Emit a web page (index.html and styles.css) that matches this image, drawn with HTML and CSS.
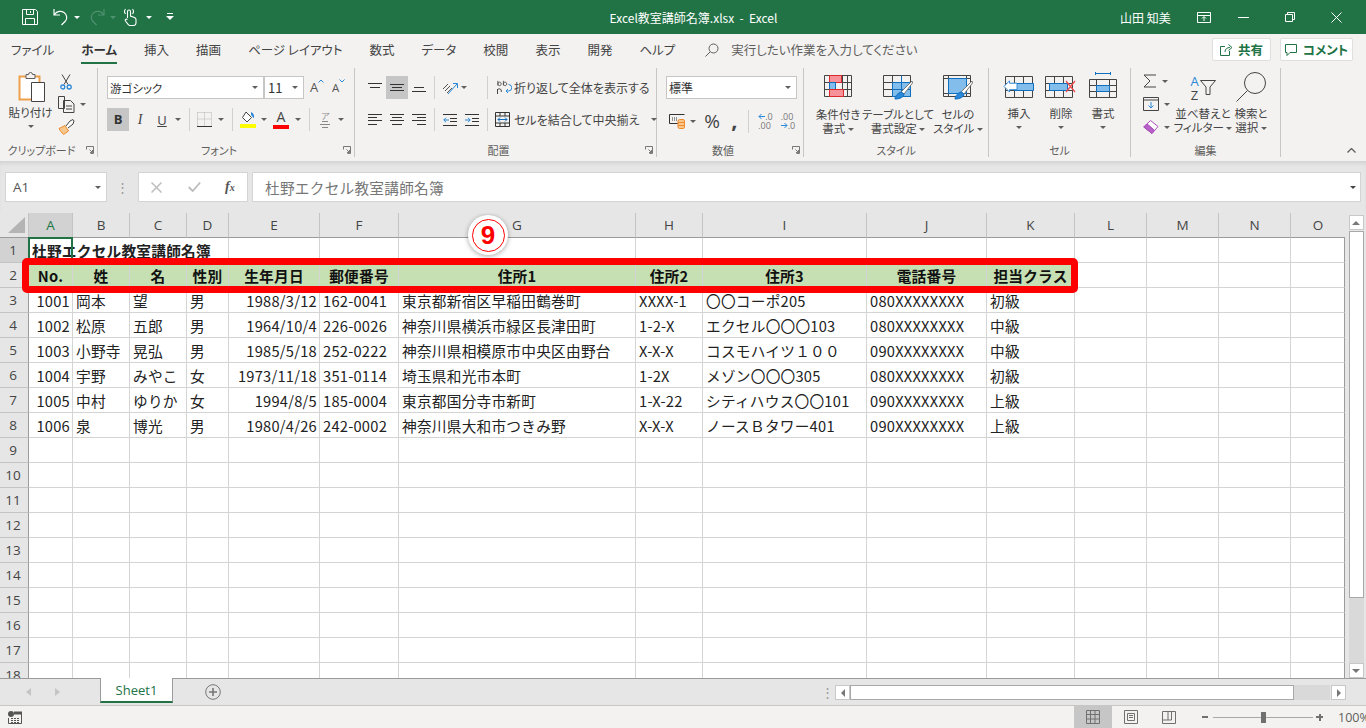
FILE: index.html
```html
<!DOCTYPE html>
<html lang="ja">
<head>
	<meta charset="UTF-8">
	<title>Excel教室講師名簿.xlsx - Excel</title>
	<link rel="stylesheet" href="styles.css">
</head>
<body>
	<header class="titlebar">
		<div class="qat">
			<svg class="q-save" width="18" height="18" viewBox="0 0 18 18" fill="none" stroke="#fff"><path d="M1.500 1.500h13l2 2v13h-15zM5.500 1.500v5h7v-5M4.500 16.500v-6h9v6M9.500 3v2"/></svg>
			<svg class="q-undo" width="16" height="18" viewBox="0 0 16 18" fill="none" stroke="#fff" stroke-width="1.200"><path d="M1 1v6h6M1.500 6.500C4 3 8 2.500 11 4.500s3.500 6 1.500 8.500l-4 4"/></svg>
			<i class="dd dd-white q-dd"></i>
			<svg class="q-redo" width="16" height="18" viewBox="0 0 16 18" fill="none" stroke="#4f9170" stroke-width="1.200"><path d="M15 1v6H9M14.500 6.500C12 3 8 2.500 5 4.500s-3.500 6-1.500 8.500l4 4"/></svg>
			<i class="dd dd-dim q-dd"></i>
			<svg class="q-touch" width="14" height="18" viewBox="0 0 14 18" fill="none" stroke="#fff" stroke-width="1.100"><path d="M4.500 10V3.500a1.500 1.500 0 0 1 3 0V8l4 1.500c1 .5 1.500 1 1.500 2V15c0 1.500-1 2.500-2.500 2.500H7c-1 0-1.500-.5-2-1.200L2.500 13c-.8-1 .5-2.500 2-1.500M2.500 6a4 4 0 0 1 0-5 M9.500 6a4 4 0 0 0 0-5"/></svg>
			<i class="dd dd-white q-dd2"></i>
			<svg class="q-more" width="8" height="8" viewBox="0 0 8 8" fill="#fff"><path d="M1 0h6v1H1zM0 3h8L4 7z"/></svg>
		</div>
		<div class="doc-title">Excel教室講師名簿.xlsx &nbsp;-&nbsp; Excel</div>
		<div class="win">
			<span class="user">山田 知美</span>
			<svg class="w-ribbon" width="14" height="11" viewBox="0 0 14 11" fill="none" stroke="#fff"><path d="M.5.500h13v10H.500zM.5 3.500h13M7 9V5M5 6.500l2-2 2 2"/></svg>
			<svg class="w-min" width="11" height="1" viewBox="0 0 11 1"><path d="M0 0h11v1H0z" fill="#fff"/></svg>
			<svg class="w-max" width="10" height="10" viewBox="0 0 10 10" fill="none" stroke="#fff"><path d="M.5 2.500h7v7h-7zM2.500 2.500v-2h7v7h-2"/></svg>
			<svg class="w-close" width="11" height="11" viewBox="0 0 11 11" stroke="#fff"><path d="M.5.500l10 10M10.500.500l-10 10"/></svg>
		</div>
	</header>

	<nav class="tabs">
		<span class="tab">ファイル</span>
		<span class="tab tab-on">ホーム</span>
		<span class="tab">挿入</span>
		<span class="tab">描画</span>
		<span class="tab">ページ レイアウト</span>
		<span class="tab">数式</span>
		<span class="tab">データ</span>
		<span class="tab">校閲</span>
		<span class="tab">表示</span>
		<span class="tab">開発</span>
		<span class="tab">ヘルプ</span>
		<svg class="search" width="14" height="14" viewBox="0 0 14 14" fill="none" stroke="#605e5c"><circle cx="8.500" cy="5.500" r="4.500"/><path d="M5.200 8.800L.5 13.500"/></svg>
		<span class="tell">実行したい作業を入力してください</span>
		<span class="pill pill-share">
			<svg width="13" height="13" viewBox="0 0 13 13" fill="none" stroke="#217346"><path d="M5 3.500H.5v9h9V8M5 9c0-3 2-4.500 5-4.500M8.500 1.500l3.500 3-3.500 3"/></svg>
			共有
		</span>
		<span class="pill pill-comment">
			<svg width="13" height="12" viewBox="0 0 13 12" fill="none" stroke="#217346"><path d="M.5.500h11v8H5l-3 3v-3H.5z"/></svg>
			コメント
		</span>
	</nav>

	<section class="ribbon">
		<div class="group g-clip">
			<div class="group-body clip-body">
				<div class="big paste">
					<svg width="28" height="31" viewBox="0 0 28 31" fill="none"><path d="M1.500 5.500h20v23h-20z" fill="#fff" stroke="#ed9f4b" stroke-width="2"/><path d="M8 3.500h2.500a2 2 0 0 1 4 0H17v4H8z" fill="#f3f2f1" stroke="#605e5c"/><path d="M13.500 11.500h13v19h-13z" fill="#fff" stroke="#444"/></svg>
					<span>貼り付け</span>
					<i class="dd"></i>
				</div>
				<div class="clip-tools">
					<svg class="cut" width="12" height="16" viewBox="0 0 12 16" fill="none"><path d="M2 .5l6 10M10 .5l-6 10" stroke="#444"/><circle cx="2.800" cy="13" r="2" stroke="#2b88d8" stroke-width="1.300"/><circle cx="9.200" cy="13" r="2" stroke="#2b88d8" stroke-width="1.300"/></svg>
					<span class="copy-row">
						<svg width="17" height="17" viewBox="0 0 17 17" fill="none" stroke="#444"><path d="M.5.500h6l0 12h-6zM5.500 4.500h7l3.500 3.500v8.500H5.500zM8 10h6M8 13h6"/></svg>
						<i class="dd"></i>
					</span>
					<svg class="painter" width="17" height="16" viewBox="0 0 17 16" fill="none"><path d="M1 9.500l6-3 3.500 5.500-5 3.500C4 14 2 11.500 1 9.500z" fill="#f8c78e" stroke="#ed8b2e"/><path d="M8 7l4-5 3-1.500 1 1.500-1 3-5 4" fill="#fff" stroke="#444"/></svg>
				</div>
			</div>
			<div class="group-label"><span>クリップボード</span><svg class="launch" width="8" height="8" viewBox="0 0 8 8" fill="none" stroke="#777"><path d="M.5 3.500v-3h7v7h-3M3.500 3.500l3 3M4 6.500h2.500V4"/></svg></div>
		</div>

		<div class="group g-font">
			<div class="group-body">
				<div class="font-top">
					<div class="combo combo-font"><span>游ゴシック</span><i class="dd"></i></div>
					<div class="combo combo-size"><span>11</span><i class="dd"></i></div>
					<span class="grow-a">A<svg width="6" height="4" viewBox="0 0 6 4" fill="none" stroke="#2b88d8"><path d="M.5 3.500L3 1l2.500 2.500"/></svg></span>
					<span class="grow-a small-a">A<svg width="6" height="4" viewBox="0 0 6 4" fill="none" stroke="#2b88d8"><path d="M.5.500L3 3 5.500.500"/></svg></span>
				</div>
				<div class="font-tools">
					<b class="btn-b">B</b>
					<span class="btn-i">I</span>
					<span class="btn-u">U</span>
					<i class="dd"></i>
					<i class="vsep"></i>
					<svg width="15" height="15" viewBox="0 0 15 15" fill="none" stroke="#b5b5b5" stroke-dasharray="1 1"><path d="M.5.500h14v13M.5.500v13M7.500.500v13M.5 7h14"/><path d="M0 14.500h15" stroke="#333" stroke-dasharray="none"/></svg>
					<i class="dd"></i>
					<i class="vsep"></i>
					<span class="swatch-ico">
						<svg width="16" height="12" viewBox="0 0 16 12" fill="none"><path d="M6 1l5.500 5.500L7 11 2.500 6.500z" fill="#fff" stroke="#444"/><path d="M11 1c2.500 1 3.500 3.500 3 6-1.500-.5-1.500-2-3-3z" fill="#2b88d8"/></svg>
						<i class="bar bar-yellow"></i>
					</span>
					<i class="dd"></i>
					<span class="swatch-ico color-a">A<i class="bar bar-red"></i></span>
					<i class="dd"></i>
					<i class="vsep"></i>
					<span class="phon"><span class="phon-a">ア</span><svg width="10" height="7" viewBox="0 0 10 7" stroke="#888"><path d="M2 .5h6M0 3.500h10M2 6.500h6"/></svg></span>
					<i class="dd"></i>
				</div>
			</div>
			<div class="group-label"><span>フォント</span><svg class="launch" width="8" height="8" viewBox="0 0 8 8" fill="none" stroke="#777"><path d="M.5 3.500v-3h7v7h-3M3.500 3.500l3 3M4 6.500h2.500V4"/></svg></div>
		</div>

		<div class="group g-align">
			<div class="group-body align-grid">
				<span class="ai"><svg width="14" height="11" viewBox="0 0 14 11" stroke="#333"><path d="M0 1.500h14M2 5.500h10"/></svg></span>
				<span class="ai ai-on"><svg width="14" height="11" viewBox="0 0 14 11" stroke="#333"><path d="M0 2.500h14M2 5.500h10M0 8.500h14"/></svg></span>
				<span class="ai"><svg width="14" height="11" viewBox="0 0 14 11" stroke="#333"><path d="M2 5.500h10M0 9.500h14M2 1.500"/></svg></span>
				<i class="vsep"></i>
				<span class="ai"><svg width="16" height="14" viewBox="0 0 16 14" fill="none"><path d="M1 8l5-5M3 10l5-5M5 12l5-5" stroke="#555"/><path d="M6 13L15 3M11 2.500h4.500V7" stroke="#2b88d8"/></svg></span>
				<i class="dd dd-left"></i>
				<i class="vsep"></i>
				<span class="wide wide-wrap">
					<svg width="15" height="16" viewBox="0 0 15 16" fill="none"><path d="M10 9h1.500a3 3 0 0 0 0-6.500M9 9l2-2M9 9l2 2" stroke="#2b88d8" transform="translate(0 2)"/><path d="M.5 14V9M.5 11.500A2 2 0 1 1 4 12" stroke="#444"/><path d="M1 1v5.500M1 4.500a2 2 0 1 1 0 .1M7.500 1v5.500M7.500 4.500a2 2 0 1 1 0 .1" stroke="#444" transform="scale(.85)"/></svg>
					<span>折り返して全体を表示する</span>
				</span>
				<span class="ai"><svg width="14" height="11" viewBox="0 0 14 11" stroke="#333"><path d="M0 .5h14M0 3.500h9M0 6.500h14M0 10.500h9"/></svg></span>
				<span class="ai"><svg width="14" height="11" viewBox="0 0 14 11" stroke="#333"><path d="M0 .5h14M2 3.500h10M0 6.500h14M2 10.500h10"/></svg></span>
				<span class="ai"><svg width="14" height="11" viewBox="0 0 14 11" stroke="#333"><path d="M0 .5h14M5 3.500h9M0 6.500h14M5 10.500h9"/></svg></span>
				<i class="vsep"></i>
				<span class="ai"><svg width="14" height="12" viewBox="0 0 14 12" fill="none"><path d="M0 .5h14M7 4.500h7M7 7.500h7M0 11.500h14" stroke="#333"/><path d="M6 6H.8M3 3.800L.8 6 3 8.200" stroke="#2b88d8"/></svg></span>
				<span class="ai"><svg width="14" height="12" viewBox="0 0 14 12" fill="none"><path d="M0 .5h14M7 4.500h7M7 7.500h7M0 11.500h14" stroke="#333"/><path d="M0 6h5.200M3 3.800L5.200 6 3 8.200" stroke="#2b88d8"/></svg></span>
				<i class="vsep"></i>
				<span class="wide wide-merge">
					<svg width="15" height="15" viewBox="0 0 15 15" fill="none"><path d="M.5.500h14v14H.5zM.5 4h14M.5 11h14M5 .5V4M10 .5V4M5 11v3.500M10 11v3.500" stroke="#333"/><path d="M3 7.500h9M5 5.500l-2 2 2 2M10 5.500l2 2-2 2" stroke="#106ebe"/></svg>
					<span>セルを結合して中央揃え</span>
					<i class="dd"></i>
				</span>
			</div>
			<div class="group-label"><span>配置</span><svg class="launch" width="8" height="8" viewBox="0 0 8 8" fill="none" stroke="#777"><path d="M.5 3.500v-3h7v7h-3M3.500 3.500l3 3M4 6.500h2.500V4"/></svg></div>
		</div>

		<div class="group g-num">
			<div class="group-body">
				<div class="combo combo-num"><span>標準</span><i class="dd"></i></div>
				<div class="num-tools">
					<svg width="16" height="16" viewBox="0 0 16 16" fill="none"><path d="M.5 1.500h15M.5 1.500v9h9" stroke="#333"/><path d="M3 5h6M3 7h6" stroke="#333" stroke-dasharray="1 1"/><rect x="9" y="6.500" width="6.500" height="9" rx="1.500" fill="#f8c78e" stroke="#ed8b2e"/><path d="M9 9.500h6.500M9 12.500h6.500" stroke="#ed8b2e"/></svg>
					<i class="dd"></i>
					<span class="pct">%</span>
					<span class="comma">,</span>
					<i class="vsep"></i>
					<span class="dec"><svg width="7" height="7" viewBox="0 0 7 7" fill="none" stroke="#2b88d8"><path d="M7 3.500H1M3.500 1L1 3.500 3.500 6"/></svg>.0<br><em>.00</em></span>
					<span class="dec"><em>.00</em><br><svg width="7" height="7" viewBox="0 0 7 7" fill="none" stroke="#2b88d8"><path d="M0 3.500h6M3.500 1L6 3.500 3.500 6"/></svg>.0</span>
				</div>
			</div>
			<div class="group-label"><span>数値</span><svg class="launch" width="8" height="8" viewBox="0 0 8 8" fill="none" stroke="#777"><path d="M.5 3.500v-3h7v7h-3M3.500 3.500l3 3M4 6.500h2.500V4"/></svg></div>
		</div>

		<div class="group g-style">
			<div class="group-body big-row">
				<div class="big">
					<svg class="top-ico" width="28" height="23" viewBox="0 0 28 23" fill="none"><path d="M.5.500h27v21H.5zM.5 7.500h27M.5 14.500h27M5.500.5v21M18.500.5v21M23.500.5v21" stroke="#444"/><path d="M5.500.5h12v7h-12z" fill="#f7929a" stroke="#d92b2b"/><path d="M5.500 7.500h6v7h-6z" fill="#83bdec" stroke="#106ebe"/><path d="M5.500 14.500h14v7h-14z" fill="#f7929a" stroke="#d92b2b"/></svg>
					<span>条件付き</span>
					<span>書式 <i class="dd"></i></span>
				</div>
				<div class="big">
					<svg class="top-ico" width="30" height="25" viewBox="0 0 30 25" fill="none"><path d="M.5.500h27v21H.5zM.5 7.500h27M.5 14.500h27M9.500.5v21M18.500.5v21" stroke="#444"/><path d="M9.500 7.500h18v14h-18z" fill="#83bdec"/><path d="M9.500 7.500h18v14h-18zM18.500 .5v21M9.500 14.500h18" stroke="#106ebe"/><path d="M29 6L18 17l3 2L29.500 8z" fill="#fff" stroke="#777"/><path d="M12 24c0-3 3-6 6-7l3 2c0 3-4 5-9 5z" fill="#2b88d8" stroke="#106ebe"/></svg>
					<span>テーブルとして</span>
					<span>書式設定 <i class="dd"></i></span>
				</div>
				<div class="big">
					<svg class="top-ico" width="30" height="25" viewBox="0 0 30 25" fill="none"><path d="M.5.500h27v21H.5zM.5 3.500h27M.5 18.500h27M5.500.5v21M23.500.5v21" stroke="#444"/><path d="M5.500 3.500h18v15h-18z" fill="#83bdec" stroke="#106ebe"/><path d="M29 6L18 17l3 2L29.500 8z" fill="#fff" stroke="#777"/><path d="M12 24c0-3 3-6 6-7l3 2c0 3-4 5-9 5z" fill="#2b88d8" stroke="#106ebe"/></svg>
					<span>セルの</span>
					<span>スタイル <i class="dd"></i></span>
				</div>
			</div>
			<div class="group-label label-plain"><span>スタイル</span></div>
		</div>

		<div class="group g-cell">
			<div class="group-body big-row">
				<div class="big">
					<svg class="cell-ico" width="32" height="26" viewBox="0 0 32 26" fill="none"><path d="M2.500 4.500h27v21h-27zM2.500 11.500h27M2.500 18.500h27M11.500 4.500v21M20.500 4.500v21" stroke="#444"/><path d="M11.500 11.500h19v7h-19z" fill="#83bdec" stroke="#106ebe"/><path d="M14 11H6.500V8L1 15l5.500 7v-3H14z" transform="translate(0 0) scale(1 .8) translate(0 3)" fill="#fff" stroke="#2b88d8"/></svg>
					<span>挿入</span>
					<i class="dd"></i>
				</div>
				<div class="big">
					<svg class="cell-ico" width="32" height="26" viewBox="0 0 32 26" fill="none"><path d="M.5 4.500h27v21H.5zM.5 11.500h27M.5 18.500h27M9.500 4.500v21M18.500 4.500v21" stroke="#444"/><path d="M4.500 11.500h18v7h-18z" fill="#83bdec" stroke="#106ebe"/><path d="M21 9l9 11M30 9l-9 11" stroke="#f1494c" stroke-width="1.200"/></svg>
					<span>削除</span>
					<i class="dd"></i>
				</div>
				<div class="big">
					<svg class="cell-ico" width="28" height="26" viewBox="0 0 28 26" fill="none"><path d="M.5 7.500h27v18H.5zM.5 13.500h27M.5 19.500h27M7.500 7.500v18M20.500 7.500v18" stroke="#444"/><path d="M7.500 13.500h13v6h-13z" fill="#83bdec" stroke="#106ebe"/><path d="M6 1.500h16M6.500 0v3M21.500 0v3" stroke="#106ebe"/></svg>
					<span>書式</span>
					<i class="dd"></i>
				</div>
			</div>
			<div class="group-label label-plain"><span>セル</span></div>
		</div>

		<div class="group g-edit">
			<div class="group-body big-row">
				<div class="edit-tools">
					<span class="edit-row"><svg width="14" height="14" viewBox="0 0 14 14" fill="none" stroke="#444"><path d="M13 1H1l6 6-6 6h12"/></svg><i class="dd"></i></span>
					<span class="edit-row"><svg width="16" height="14" viewBox="0 0 16 14" fill="none"><path d="M.5.500h15v13H.5zM.5 3h15" stroke="#444"/><path d="M8 5v6M5.500 8.500L8 11l2.500-2.500" stroke="#2b88d8"/></svg><i class="dd"></i></span>
					<span class="edit-row"><svg width="16" height="14" viewBox="0 0 16 14" fill="none"><path d="M.8 7L7.500.5 15 6.500 9 13.500z" fill="#fff" stroke="#a94fb8"/><path d="M.8 7L4 3.800l7.500 6.500L9 13.500z" fill="#b660c8" stroke="#a94fb8"/></svg><i class="dd"></i></span>
				</div>
				<div class="big">
					<span class="sort-ico">
						<span class="az"><em>A</em><span>Z</span></span>
						<svg width="16" height="15" viewBox="0 0 16 15" fill="none" stroke="#444"><path d="M.5.500h15L10 7v7.500H6V7z"/></svg>
					</span>
					<span>並べ替えと</span>
					<span>フィルター <i class="dd"></i></span>
				</div>
				<div class="big">
					<svg class="top-find" width="30" height="30" viewBox="0 0 30 30" fill="none" stroke="#444"><circle cx="19" cy="11" r="10.500"/><path d="M11.500 18.500L.5 29.500"/></svg>
					<span>検索と</span>
					<span>選択 <i class="dd"></i></span>
				</div>
			</div>
			<div class="group-label label-plain"><span>編集</span></div>
		</div>

		<div class="ribbon-end">
			<svg width="9" height="5" viewBox="0 0 9 5" fill="none" stroke="#605e5c" stroke-width="1.300"><path d="M.5 4.500l4-4 4 4"/></svg>
		</div>
	</section>

	<section class="formula">
		<div class="namebox"><span>A1</span><i class="dd"></i></div>
		<div class="fdots">⋮</div>
		<div class="fbtns">
			<svg width="11" height="11" viewBox="0 0 11 11" stroke="#bdbdbd" stroke-width="1.500"><path d="M.5.500l10 10M10.500.500l-10 10"/></svg>
			<svg width="13" height="10" viewBox="0 0 13 10" fill="none" stroke="#bdbdbd" stroke-width="1.800"><path d="M.7 5l4 4 7.500-8.500"/></svg>
			<span class="fx">f<small>x</small></span>
		</div>
		<div class="finput">杜野エクセル教室講師名簿</div>
		<div class="fchev"><i class="dd dd-dark"></i></div>
	</section>

	<main class="sheet">
		<div class="gridwrap">
			<table class="grid">
				<colgroup>
					<col class="c-row"><col class="c-a"><col class="c-b"><col class="c-b"><col class="c-d"><col class="c-e"><col class="c-f"><col class="c-g"><col class="c-h"><col class="c-i"><col class="c-j"><col class="c-k"><col class="c-l"><col class="c-l"><col class="c-l"><col class="c-o">
				</colgroup>
				<thead>
					<tr>
						<th class="corner"><i></i></th>
						<th class="on">A</th><th>B</th><th>C</th><th>D</th><th>E</th><th>F</th><th>G</th><th>H</th><th>I</th><th>J</th><th>K</th><th>L</th><th>M</th><th>N</th><th>O</th>
					</tr>
				</thead>
				<tbody>
					<tr><th class="on">1</th><td colspan="4" class="title-cell">杜野エクセル教室講師名簿</td><td></td><td></td><td></td><td></td><td></td><td></td><td></td><td></td><td></td><td></td><td></td></tr>
					<tr class="head"><th>2</th><td>No.</td><td>姓</td><td>名</td><td>性別</td><td>生年月日</td><td>郵便番号</td><td>住所1</td><td>住所2</td><td>住所3</td><td>電話番号</td><td>担当クラス</td><td class="blank"></td><td class="blank"></td><td class="blank"></td><td class="blank"></td></tr>
					<tr><th>3</th><td class="r">1001</td><td>岡本</td><td>望</td><td>男</td><td class="r">1988/3/12</td><td>162-0041</td><td>東京都新宿区早稲田鶴巻町</td><td>XXXX-1</td><td>〇〇コーポ205</td><td>080XXXXXXXX</td><td>初級</td><td></td><td></td><td></td><td></td></tr>
					<tr><th>4</th><td class="r">1002</td><td>松原</td><td>五郎</td><td>男</td><td class="r">1964/10/4</td><td>226-0026</td><td>神奈川県横浜市緑区長津田町</td><td>1-2-X</td><td>エクセル〇〇〇103</td><td>080XXXXXXXX</td><td>中級</td><td></td><td></td><td></td><td></td></tr>
					<tr><th>5</th><td class="r">1003</td><td>小野寺</td><td>晃弘</td><td>男</td><td class="r">1985/5/18</td><td>252-0222</td><td>神奈川県相模原市中央区由野台</td><td>X-X-X</td><td>コスモハイツ１００</td><td>090XXXXXXXX</td><td>中級</td><td></td><td></td><td></td><td></td></tr>
					<tr><th>6</th><td class="r">1004</td><td>宇野</td><td>みやこ</td><td>女</td><td class="r">1973/11/18</td><td>351-0114</td><td>埼玉県和光市本町</td><td>1-2X</td><td>メゾン〇〇〇305</td><td>080XXXXXXXX</td><td>初級</td><td></td><td></td><td></td><td></td></tr>
					<tr><th>7</th><td class="r">1005</td><td>中村</td><td>ゆりか</td><td>女</td><td class="r">1994/8/5</td><td>185-0004</td><td>東京都国分寺市新町</td><td>1-X-22</td><td>シティハウス〇〇101</td><td>090XXXXXXXX</td><td>上級</td><td></td><td></td><td></td><td></td></tr>
					<tr><th>8</th><td class="r">1006</td><td>泉</td><td>博光</td><td>男</td><td class="r">1980/4/26</td><td>242-0002</td><td>神奈川県大和市つきみ野</td><td>X-X-X</td><td>ノースＢタワー401</td><td>090XXXXXXXX</td><td>上級</td><td></td><td></td><td></td><td></td></tr>
					<tr><th>9</th><td></td><td></td><td></td><td></td><td></td><td></td><td></td><td></td><td></td><td></td><td></td><td></td><td></td><td></td><td></td></tr>
					<tr><th>10</th><td></td><td></td><td></td><td></td><td></td><td></td><td></td><td></td><td></td><td></td><td></td><td></td><td></td><td></td><td></td></tr>
					<tr><th>11</th><td></td><td></td><td></td><td></td><td></td><td></td><td></td><td></td><td></td><td></td><td></td><td></td><td></td><td></td><td></td></tr>
					<tr><th>12</th><td></td><td></td><td></td><td></td><td></td><td></td><td></td><td></td><td></td><td></td><td></td><td></td><td></td><td></td><td></td></tr>
					<tr><th>13</th><td></td><td></td><td></td><td></td><td></td><td></td><td></td><td></td><td></td><td></td><td></td><td></td><td></td><td></td><td></td></tr>
					<tr><th>14</th><td></td><td></td><td></td><td></td><td></td><td></td><td></td><td></td><td></td><td></td><td></td><td></td><td></td><td></td><td></td></tr>
					<tr><th>15</th><td></td><td></td><td></td><td></td><td></td><td></td><td></td><td></td><td></td><td></td><td></td><td></td><td></td><td></td><td></td></tr>
					<tr><th>16</th><td></td><td></td><td></td><td></td><td></td><td></td><td></td><td></td><td></td><td></td><td></td><td></td><td></td><td></td><td></td></tr>
					<tr><th>17</th><td></td><td></td><td></td><td></td><td></td><td></td><td></td><td></td><td></td><td></td><td></td><td></td><td></td><td></td><td></td></tr>
					<tr><th>18</th><td></td><td></td><td></td><td></td><td></td><td></td><td></td><td></td><td></td><td></td><td></td><td></td><td></td><td></td><td></td></tr>
				</tbody>
			</table>
			<div class="select-box"></div>
			<div class="red-frame"></div>
			<div class="step-badge"><span>9</span></div>
		</div>
		<aside class="vscroll">
			<span class="sb-btn"><i class="sb-up"></i></span>
			<span class="sb-thumb"></span>
			<span class="sb-track"></span>
			<span class="sb-btn"><i class="sb-down"></i></span>
		</aside>
	</main>

	<section class="sheetbar">
		<div class="sheet-nav">
			<i class="nav-l"></i>
			<i class="nav-r"></i>
		</div>
		<div class="sheet-tab">Sheet1</div>
		<svg class="add-sheet" width="16" height="16" viewBox="0 0 16 16" fill="none" stroke="#777"><circle cx="8" cy="8" r="7.300"/><path d="M8 4v8M4 8h8" stroke-width="1.600"/></svg>
		<div class="hdots">⋮</div>
		<div class="hscroll">
			<span class="sb-btn"><i class="sb-left"></i></span>
			<span class="hthumb"></span>
			<span class="htrack"></span>
			<span class="sb-btn"><i class="sb-right"></i></span>
		</div>
	</section>

	<footer class="status">
		<svg class="macro" width="14" height="13" viewBox="0 0 14 13" fill="none"><circle cx="3" cy="3" r="3" fill="#555"/><path d="M6 1.500h7.500v11H.5V7" stroke="#555"/><path d="M3 7.500h9M3 9.500h9M3 11.500h9" stroke="#555" stroke-dasharray="2 1"/><path d="M6 .5h8v3H6z" fill="#555"/></svg>
		<div class="views">
			<span class="view view-on"><svg width="14" height="14" viewBox="0 0 14 14" fill="none" stroke="#707070"><path d="M.5.500h13v13H.5zM.5 4.500h13M.5 9h13M4.500.5v13M9 .5v13"/></svg></span>
			<span class="view"><svg width="14" height="14" viewBox="0 0 14 14" fill="none" stroke="#707070"><path d="M.5.500h13v13H.5zM3.500 3.500h7v7h-7zM5 5.500h4M5 7.500h4"/></svg></span>
			<span class="view"><svg width="14" height="13" viewBox="0 0 14 13" fill="none" stroke="#707070"><path d="M.5.500h13v12H.5zM.5 9h9V.5M6 .5V9"/></svg></span>
		</div>
		<div class="zoom">
			<i class="z-minus"></i>
			<span class="z-slider"><i></i></span>
			<i class="z-plus"></i>
			<span class="z-val">100%</span>
		</div>
	</footer>
</body>
</html>
```

FILE: styles.css
```css
* {
	box-sizing: border-box;
}
html, body {
	margin: 0;
	height: 728px;
	overflow: hidden;
}
body {
	display: flex;
	flex-direction: column;
	background: #f3f2f1;
	color: #444;
	font-family: "Noto Sans CJK JP", "Open Sans", sans-serif;
	font-size: 12px;
	font-feature-settings: "palt";
}
svg {
	display: block;
	flex: none;
}
i, em {
	font-style: normal;
}

/* dropdown arrow */
.dd {
	display: inline-block;
	flex: none;
	width: 0;
	height: 0;
	border-left: 3px solid transparent;
	border-right: 3px solid transparent;
	border-top: 3px solid #605e5c;
	vertical-align: middle;
}
.dd-white { border-top-color: #fff; }
.dd-dim { border-top-color: #4f9170; }
.dd-dark { border-top-color: #444; }

.vsep {
	display: block;
	width: 1px;
	height: 23px;
	background: #d2d0ce;
	justify-self: center;
}

/* title bar */
.titlebar {
	flex: none;
	height: 34px;
	background: #217346;
	color: #fff;
	display: flex;
	align-items: center;
	position: relative;
}
.qat {
	display: flex;
	align-items: center;
	width: 300px;
}
.q-save { margin-left: 21px; }
.q-undo { margin-left: 14px; }
.q-dd { margin-left: 5px; }
.q-redo { margin-left: 9px; }
.q-touch { margin-left: 7px; }
.q-dd2 { margin-left: 9px; }
.q-more { margin-left: 14px; }
.doc-title {
	flex: 1;
	text-align: center;
	padding-right: 32px;
	font-size: 12px;
}
.win {
	display: flex;
	align-items: center;
	width: 247px;
}
.user { margin-left: 1px; width: 77px; }
.w-min { margin-left: 27px; }
.w-max { margin-left: 36px; }
.w-close { margin-left: 36px; }

/* tab strip */
.tabs {
	flex: none;
	height: 31px;
	display: flex;
	align-items: center;
	padding-left: 11px;
	gap: 27px;
	font-size: 12.500px;
	position: relative;
	color: #444;
}
.tab {
	position: relative;
	white-space: nowrap;
}
.tab-on {
	font-weight: 700;
	color: #333;
}
.tab-on::after {
	content: "";
	position: absolute;
	left: 0;
	right: 0;
	bottom: -5px;
	height: 2px;
	background: #217346;
}
.search { margin-left: 3px; margin-right: -15px; }
.tell { color: #605e5c; white-space: nowrap; }
.pill {
	height: 23px;
	background: #fff;
	border: 1px solid #e1dfdd;
	border-radius: 2px;
	display: flex;
	align-items: center;
	justify-content: center;
	gap: 5px;
	color: #217346;
	font-weight: 700;
	font-size: 12.500px;
}
.pill-share { width: 59px; margin-left: auto; }
.pill-comment { width: 73px; margin-left: -18px; margin-right: 13px; }

/* ribbon */
.ribbon {
	flex: none;
	height: 96px;
	display: flex;
	align-items: flex-start;
	padding-top: 3px;
	color: #444;
	font-size: 11.500px;
}
.group {
	height: 89px;
	border-right: 1px solid #c8c6c4;
	display: flex;
	flex-direction: column;
	flex: none;
}
.group-body {
	height: 77px;
	padding-top: 8px;
}
.group-label {
	display: flex;
	align-items: center;
	height: 14px;
	color: #605e5c;
	font-size: 11px;
	margin-top: 0;
}
.group-label span {
	flex: 1;
	text-align: center;
	white-space: nowrap;
}
.launch { margin: 0 3px 0 3px; }

.g-clip { width: 98px; }
.g-font { width: 257px; }
.g-align { width: 302px; }
.g-num { width: 147px; }
.g-style { width: 185px; }
.g-cell { width: 142px; }
.g-edit { width: 150px; }

.big {
	display: flex;
	flex-direction: column;
	align-items: center;
	white-space: nowrap;
	line-height: 14px;
	width: 42px;
	flex: none;
}
.big .dd { vertical-align: 2px; }
.big > .dd { margin-top: 6px; }
.clip-body {
	display: flex;
	padding-top: 3px;
}
.paste {
	margin-left: 9px;
	width: 43px;
	flex: none;
}
.paste svg { margin-bottom: 3px; margin-left: 3px; }
.clip-tools {
	display: flex;
	flex-direction: column;
	margin-left: 6px;
	padding-top: 3px;
	gap: 6px;
}
.cut { margin-left: 2px; }
.copy-row {
	display: flex;
	align-items: center;
	gap: 5px;
}
.painter { margin-top: 0; }

.font-top {
	display: flex;
	align-items: center;
	padding-left: 9px;
	height: 23px;
}
.combo {
	height: 23px;
	background: #fff;
	border: 1px solid #c8c6c4;
	display: flex;
	align-items: center;
	justify-content: space-between;
	padding: 0 5px 0 2px;
	font-size: 11.500px;
	color: #333;
}
.combo-font { width: 157px; }
.combo-size { width: 40px; padding-left: 3px; font-size: 13px; }
.grow-a {
	display: flex;
	align-items: flex-start;
	margin-left: 6px;
	width: 16px;
	font-family: "Open Sans", sans-serif;
	font-size: 13px;
	line-height: 17px;
	color: #555;
}
.small-a {
	margin-left: 6px;
	font-size: 11.500px;
}
.font-tools {
	display: grid;
	grid-template-columns: 22px 22px 22px 10px 12px 19px 13px 10px 22px 10px 24px 10px 12px 20px 12px;
	align-items: center;
	justify-items: center;
	height: 23px;
	margin: 9px 0 0 9px;
	font-family: "Open Sans", sans-serif;
}
.btn-b {
	width: 22px;
	height: 23px;
	background: #c6c6c6;
	line-height: 23px;
	text-align: center;
	font-size: 13px;
	color: #333;
}
.btn-i {
	font-style: italic;
	font-family: "Liberation Serif", serif;
	font-size: 14px;
}
.btn-u {
	text-decoration: underline;
	font-size: 13px;
}
.swatch-ico {
	display: flex;
	flex-direction: column;
	align-items: center;
	font-size: 14px;
	line-height: 14px;
}
.bar {
	display: block;
	width: 16px;
	height: 4px;
	margin-top: 1px;
}
.bar-yellow { background: #ffff00; }
.bar-red { background: #ff0000; }
.phon {
	display: flex;
	flex-direction: column;
	align-items: center;
	color: #888;
	line-height: 10px;
}
.phon-a { font-size: 9px; }

.align-grid {
	display: grid;
	grid-template-columns: 23px 22px 22px 8px 23px 22px 8px 1fr;
	grid-template-rows: 23px 23px;
	row-gap: 9px;
	padding-left: 8px;
	align-items: center;
	justify-items: center;
}
.ai {
	width: 22px;
	height: 23px;
	display: flex;
	align-items: center;
	justify-content: center;
}
.ai-on { background: #c6c6c6; }
.dd-left { justify-self: start; }
.wide {
	display: flex;
	align-items: center;
	justify-self: start;
	white-space: nowrap;
	font-size: 12px;
}
.wide-wrap { gap: 2px; margin-left: 6px; }
.wide-merge { gap: 4px; margin-left: 4px; }
.wide-merge .dd { margin-left: 8px; }

.g-num .group-body { padding-left: 9px; }
.combo-num { width: 131px; font-size: 12px; }
.num-tools {
	display: grid;
	grid-template-columns: 22px 9px 30px 15px 12px 23px 22px;
	align-items: center;
	justify-items: center;
	height: 23px;
	margin-top: 9px;
}
.pct {
	font-family: "Open Sans", sans-serif;
	font-size: 19px;
	color: #444;
}
.comma {
	font-family: "Open Sans", sans-serif;
	font-weight: 700;
	font-size: 22px;
	line-height: 16px;
	height: 20px;
	color: #444;
}
.dec {
	font-family: "Open Sans", sans-serif;
	font-size: 9px;
	line-height: 9px;
	color: #777;
	white-space: nowrap;
}
.dec svg { display: inline-block; }

.big-row {
	display: flex;
	padding-top: 4px;
}
.g-style .big-row { padding-left: 4px; }
.g-style .big { width: 60px; }
.top-ico { margin: 3px 0 7px; }
.g-style .big:first-child .top-ico { margin-bottom: 9px; }

.g-cell .big-row { padding-left: 9px; }
.cell-ico { margin: 0 0 8px; }

.edit-tools {
	width: 48px;
	padding: 2px 0 0 12px;
	display: flex;
	flex-direction: column;
	gap: 9px;
	flex: none;
}
.edit-row {
	display: flex;
	align-items: center;
	gap: 5px;
}
.g-edit .big { width: 48px; }
.sort-ico {
	display: flex;
	align-items: flex-end;
	height: 30px;
	margin-bottom: 4px;
	gap: 1px;
}
.sort-ico svg { margin-bottom: 7px; }
.az {
	display: flex;
	flex-direction: column;
	font-family: "Open Sans", sans-serif;
	font-size: 13px;
	line-height: 14px;
	align-items: center;
	color: #444;
}
.az em { color: #2b88d8; }
.top-find { margin-bottom: 4px; }

.ribbon-end {
	flex: 1;
	height: 89px;
	display: flex;
	justify-content: flex-end;
	align-items: flex-end;
	padding: 0 10px 4px 0;
}

/* formula bar */
.formula {
	flex: none;
	height: 52px;
	background: #e6e6e6;
	box-shadow: inset 0 4px 4px -2px #cfcfcf;
	display: flex;
	align-items: flex-start;
	padding: 11px 5px 0;
}
.namebox, .fbtns, .finput {
	height: 30px;
	background: #fff;
	border: 1px solid #d4d4d4;
	display: flex;
	align-items: center;
}
.namebox {
	width: 102px;
	justify-content: space-between;
	padding: 0 5px 0 7px;
	font-family: "Open Sans", sans-serif;
	font-size: 13.500px;
	color: #555;
}
.fdots {
	width: 31px;
	line-height: 30px;
	text-align: center;
	color: #999;
	font-size: 13px;
}
.fbtns {
	width: 110px;
	padding-left: 12px;
	gap: 26px;
}
.fx {
	font-family: "Liberation Serif", serif;
	font-style: italic;
	font-weight: 700;
	color: #555;
	font-size: 14px;
	margin-left: -2px;
}
.fx small { font-size: 10px; }
.finput {
	flex: 1;
	margin-left: 4px;
	padding-left: 12px;
	font-size: 14.670px;
	letter-spacing: .25px;
	color: #777;
	font-feature-settings: normal;
	border-right: 0;
}
.fchev {
	height: 30px;
	width: 15px;
	background: #fff;
	border: 1px solid #d4d4d4;
	border-left: 0;
	display: flex;
	align-items: center;
	justify-content: center;
}

/* sheet */
.sheet {
	flex: none;
	height: 465px;
	display: flex;
	background: #e6e6e6;
	overflow: hidden;
}
.gridwrap {
	width: 1345px;
	position: relative;
	overflow: hidden;
	flex: none;
}
.grid {
	table-layout: fixed;
	width: 1345px;
	border-collapse: separate;
	border-spacing: 0;
	background: #fff;
	font-size: 14.670px;
	letter-spacing: .25px;
	font-feature-settings: normal;
	color: #222;
}
.c-row { width: 29px; }
.c-a { width: 44px; }
.c-b { width: 57px; }
.c-d { width: 42px; }
.c-e { width: 91px; }
.c-f { width: 79px; }
.c-g { width: 237px; }
.c-h { width: 67px; }
.c-i { width: 164px; }
.c-j { width: 120px; }
.c-k { width: 88px; }
.c-l { width: 72px; }
.c-o { width: 54px; }

.grid th {
	background: #e6e6e6;
	font-family: "Open Sans", sans-serif;
	font-weight: 400;
	font-size: 13.500px;
	color: #444;
	padding: 0;
	text-align: center;
	letter-spacing: 0;
}
.grid thead th {
	height: 25px;
	border-bottom: 1px solid #9b9b9b;
	border-right: 1px solid #c4c4c4;
}
.grid tbody th {
	height: 25px;
	border-bottom: 1px solid #c4c4c4;
	border-right: 1px solid #9b9b9b;
	padding-right: 2px;
}
.grid th.on {
	background: #d2d2d2;
	color: #217346;
}
.grid tbody th.on {
	color: #444;
}
.grid thead th:last-child {
	text-align: center;
	border-right: 0;
}
.corner {
	position: relative;
}
.corner i {
	display: block;
	width: 0;
	height: 0;
	margin: 0 0 0 8px;
	border-left: 17px solid transparent;
	border-bottom: 16px solid #b4b4b4;
}
.grid td {
	height: 25px;
	padding: 0 2px 0 3px;
	border-right: 1px solid #d4d4d4;
	border-bottom: 1px solid #d4d4d4;
	white-space: nowrap;
	overflow: hidden;
}
.grid tbody td:last-child {
	border-right: 1px solid #9b9b9b;
}
.grid td.r {
	text-align: right;
}
.title-cell {
	font-weight: 700;
	padding-left: 4px;
}
.head td {
	background: #c6e0b4;
	font-weight: 700;
	text-align: center;
	padding: 0;
	color: #111;
}
.head td.blank {
	background: #fff;
}
.select-box {
	position: absolute;
	left: 28px;
	top: 24px;
	width: 45px;
	height: 26px;
	border: 2px solid #217346;
	pointer-events: none;
}
.red-frame {
	position: absolute;
	left: 22px;
	top: 45px;
	width: 1056px;
	height: 35px;
	border: 7px solid #ff0000;
	border-radius: 5px;
}
.step-badge {
	position: absolute;
	left: 468px;
	top: 2px;
	width: 40px;
	height: 40px;
	border-radius: 50%;
	background: #fff;
	box-shadow: 0 1px 5px rgba(0, 0, 0, .35);
	display: flex;
	align-items: center;
	justify-content: center;
}
.step-badge span {
	width: 33px;
	height: 33px;
	border-radius: 50%;
	border: 1.500px solid #ff0000;
	color: #ff0000;
	font-family: "Liberation Sans", sans-serif;
	font-weight: 700;
	font-size: 26px;
	line-height: 30px;
	text-align: center;
}

/* scrollbars */
.vscroll {
	width: 21px;
	display: flex;
	flex-direction: column;
	align-items: center;
	padding: 2px 0 0 1px;
}
.sb-btn {
	flex: none;
	width: 15px;
	height: 15px;
	background: #fff;
	border: 1px solid #c8c8c8;
	display: flex;
	align-items: center;
	justify-content: center;
}
.sb-up, .sb-down, .sb-left, .sb-right {
	display: block;
	width: 0;
	height: 0;
}
.sb-up {
	border-left: 4px solid transparent;
	border-right: 4px solid transparent;
	border-bottom: 4px solid #777;
}
.sb-down {
	border-left: 4px solid transparent;
	border-right: 4px solid transparent;
	border-top: 4px solid #777;
}
.sb-left {
	border-top: 4px solid transparent;
	border-bottom: 4px solid transparent;
	border-right: 4px solid #777;
}
.sb-right {
	border-top: 4px solid transparent;
	border-bottom: 4px solid transparent;
	border-left: 4px solid #777;
}
.sb-thumb {
	flex: none;
	width: 15px;
	height: 367px;
	margin-top: 1px;
	background: #fff;
	border: 1px solid #a8a8a8;
}
.sb-track {
	flex: 1;
	width: 15px;
	background: #d9d9d9;
}

/* sheet tabs */
.sheetbar {
	flex: none;
	height: 28px;
	background: #e6e6e6;
	border-top: 1px solid #9b9b9b;
	border-bottom: 1px solid #c8c6c4;
	display: flex;
	align-items: flex-start;
}
.sheet-nav {
	width: 100px;
	height: 26px;
	display: flex;
	align-items: center;
	padding-left: 26px;
	gap: 24px;
}
.nav-l {
	border-top: 4px solid transparent;
	border-bottom: 4px solid transparent;
	border-right: 5px solid #c4c4c4;
}
.nav-r {
	border-top: 4px solid transparent;
	border-bottom: 4px solid transparent;
	border-left: 5px solid #c4c4c4;
}
.sheet-tab {
	width: 73px;
	height: 25px;
	margin-top: -1px;
	background: #fff;
	border: 1px solid #9b9b9b;
	border-top: 0;
	border-bottom: 2px solid #217346;
	text-align: center;
	font-family: "Open Sans", sans-serif;
	font-size: 13px;
	line-height: 24px;
	color: #217346;
}
.add-sheet { margin: 5px 0 0 32px; }
.hdots {
	margin-left: 598px;
	width: 16px;
	line-height: 26px;
	color: #999;
	font-size: 13px;
	text-align: center;
}
.hscroll {
	display: flex;
	align-items: center;
	width: 511px;
	height: 15px;
	margin-top: 6px;
}
.hthumb {
	width: 444px;
	height: 15px;
	background: #fff;
	border: 1px solid #a8a8a8;
	margin-left: 0;
}
.htrack {
	width: 36px;
	height: 15px;
	background: #d9d9d9;
}
.hscroll .sb-btn:last-child { margin-left: 1px; }

/* status bar */
.status {
	flex: 1;
	display: flex;
	align-items: center;
	color: #605e5c;
}
.macro { margin-left: 8px; }
.views {
	display: flex;
	margin-left: 1052px;
	align-self: stretch;
}
.view {
	width: 38px;
	display: flex;
	align-items: center;
	justify-content: center;
}
.view-on { background: #c6c6c6; }
.zoom {
	display: flex;
	align-items: center;
	margin-left: 14px;
}
.z-minus {
	width: 6px;
	height: 2px;
	background: #707070;
}
.z-slider {
	width: 100px;
	height: 1px;
	margin-left: 5px;
	background: #a8a8a8;
	display: flex;
	align-items: center;
	justify-content: center;
}
.z-slider i {
	display: block;
	width: 5px;
	height: 11px;
	background: #707070;
}
.z-plus {
	width: 7px;
	height: 7px;
	margin-left: 3px;
	background: linear-gradient(#707070, #707070) center / 7px 2px no-repeat, linear-gradient(#707070, #707070) center / 2px 7px no-repeat;
}
.z-val {
	margin-left: 15px;
	font-family: "Open Sans", sans-serif;
	font-size: 12.500px;
}
```
